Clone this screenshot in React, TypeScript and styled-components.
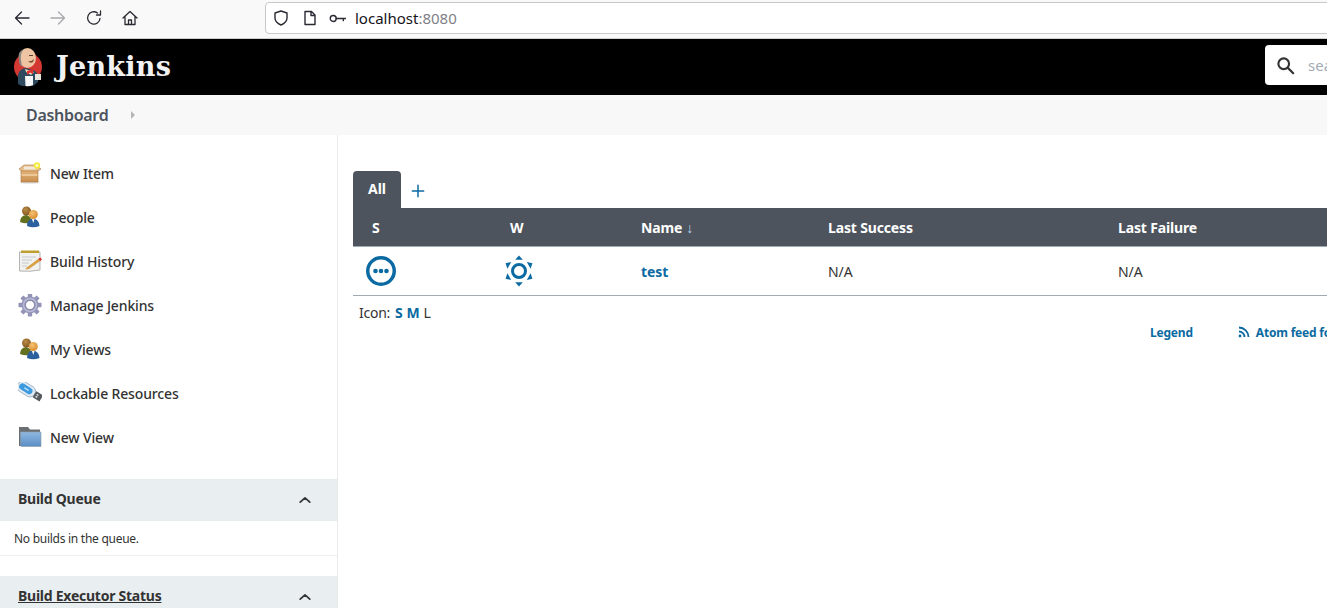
import React, { ReactNode } from 'react';
import styled, { createGlobalStyle } from 'styled-components';

const BLUE = '#0b6aa2';
const SLATE = '#4d545d';

const GlobalStyle = createGlobalStyle`
  html, body {
    margin: 0;
    height: 100%;
    overflow: hidden;
    background: #fff;
  }
  body {
    font-family: "Noto Sans", "Open Sans", sans-serif;
    color: #333;
  }
`;

const Page = styled.div`
  width: 1327px;
  height: 608px;
  overflow: hidden;
  display: flex;
  flex-direction: column;
`;

const Toolbar = styled.div`
  flex: 0 0 39px;
  box-sizing: border-box;
  display: flex;
  align-items: center;
  padding: 0 0 2px 14px;
  background: #f9f9fa;
  border-bottom: 1px solid #cfcfd2;
`;

const NavButton = styled.div<{ gap?: number }>`
  width: 16px;
  height: 16px;
  display: flex;
  margin-right: ${(props) => props.gap ?? 20}px;
`;

const UrlBar = styled.div`
  flex: 1;
  height: 30px;
  margin-right: -20px;
  display: flex;
  align-items: center;
  padding-left: 7px;
  background: #fff;
  border: 1px solid #c8c8cb;
  border-radius: 4px;
`;

const UrlIcon = styled.div<{ gap: number }>`
  display: flex;
  margin-right: ${(props) => props.gap}px;
`;

const UrlText = styled.span`
  font-size: 15px;
  color: #15141a;
`;

const UrlPort = styled.span`
  color: #7f7f86;
`;

const Header = styled.header`
  flex: 0 0 56px;
  display: flex;
  align-items: center;
  padding-left: 13px;
  background: #000;
`;

const LogoSlot = styled.div`
  display: flex;
  margin-bottom: 1px;
`;

const Wordmark = styled.div`
  margin: 0 0 1px 13px;
  font-family: "DejaVu Serif", "Liberation Serif", serif;
  font-size: 27px;
  font-weight: 700;
  letter-spacing: 0.25px;
  color: #f2f2f2;
`;

const SearchBox = styled.div`
  flex: 0 0 200px;
  height: 40px;
  margin: 0 -138px 4px auto;
  display: flex;
  align-items: center;
  padding-left: 11px;
  background: #fff;
  border-radius: 4px;
  box-sizing: border-box;
`;

const SearchHint = styled.span`
  margin: 0 0 1px 13px;
  font-size: 15px;
  color: #a3acb3;
`;

const Breadcrumbs = styled.nav`
  flex: 0 0 40px;
  display: flex;
  align-items: center;
  padding-left: 26px;
  background: #f8f8f8;
`;

const Crumb = styled.span`
  font-size: 16px;
  font-weight: 600;
  letter-spacing: -0.3px;
  color: ${SLATE};
`;

const CrumbArrow = styled.span`
  width: 0;
  height: 0;
  margin-left: 23px;
  border-left: 4px solid #b5b5b5;
  border-top: 4px solid transparent;
  border-bottom: 4px solid transparent;
`;

const Body = styled.div`
  flex: 1;
  display: flex;
  min-height: 0;
`;

const Sidebar = styled.aside`
  flex: 0 0 337px;
  padding-top: 17px;
  border-right: 1px solid #eaeaea;
`;

const TaskList = styled.div`
  margin-bottom: 19px;
`;

const Task = styled.div`
  height: 44px;
  display: flex;
  align-items: center;
  gap: 8px;
  padding-left: 18px;
  font-size: 14px;
  font-weight: 500;
  letter-spacing: -0.15px;
  color: #333;
`;

const TaskLabel = styled.span`
  margin-bottom: 2px;
`;

const TaskIcon = styled.div`
  width: 24px;
  height: 24px;
  display: flex;
`;

const PaneHeader = styled.div`
  height: 42px;
  display: flex;
  align-items: center;
  justify-content: space-between;
  padding: 0 25px 0 18px;
  background: #e9eef1;
  font-size: 14px;
  font-weight: 700;
  letter-spacing: -0.25px;
  color: #333;
`;

const PaneTitle = styled.span<{ linked?: boolean }>`
  margin-bottom: 4px;
  text-decoration: ${(props) => (props.linked ? 'underline' : 'none')};
`;

const PaneBody = styled.div`
  height: 34px;
  display: flex;
  align-items: center;
  padding-left: 14px;
  margin-bottom: 20px;
  border-bottom: 1px solid #eee;
  font-size: 12px;
  letter-spacing: -0.27px;
  color: #333;
`;

const Main = styled.main`
  flex: 1;
  min-width: 0;
  padding: 36px 0 0 15px;
  white-space: nowrap;
`;

const Tabs = styled.div`
  display: flex;
  align-items: center;
  height: 37px;
`;

const ActiveTab = styled.div`
  width: 48px;
  height: 37px;
  padding-top: 9px;
  box-sizing: border-box;
  text-align: center;
  background: ${SLATE};
  border-radius: 4px 4px 0 0;
  font-size: 14px;
  line-height: 17px;
  font-weight: 700;
  color: #fff;
`;

const AddTab = styled.div`
  display: flex;
  margin: 3px 0 0 10px;
`;

const Grid = styled.div<{ head?: boolean }>`
  display: grid;
  grid-template-columns: 138px 137px 187px 290px 1fr;
  align-items: center;
  padding-left: 13px;
  height: ${(props) => (props.head ? 38 : 48)}px;
  font-size: 14px;
  letter-spacing: ${(props) => (props.head ? '-0.15px' : '-0.05px')};
  color: ${(props) => (props.head ? '#fff' : '#333')};
  font-weight: ${(props) => (props.head ? 700 : 400)};
  background: ${(props) => (props.head ? SLATE : '#fff')};
  border-bottom: 1px solid #a0abb3;
`;

const HeadCell = styled.div<{ inset?: number }>`
  padding-left: ${(props) => props.inset ?? 0}px;
`;

const SortArrow = styled.span`
  margin-left: 4px;
  font-size: 14px;
  font-weight: 400;
  color: #b9d3ee;
`;

const NameLink = styled.span`
  font-weight: 700;
  color: ${BLUE};
`;

const IconSizes = styled.div`
  height: 34px;
  box-sizing: border-box;
  display: flex;
  align-items: center;
  padding: 0 0 2px 6px;
  font-size: 14px;
  letter-spacing: -0.25px;
  color: #333;
`;

const SizeCaption = styled.span`
  margin-right: 1px;
`;

const SizeLink = styled.span<{ current?: boolean }>`
  margin-left: 4px;
  font-weight: ${(props) => (props.current ? 400 : 700)};
  color: ${(props) => (props.current ? '#333' : BLUE)};
`;

const Feeds = styled.div`
  display: flex;
  align-items: center;
  height: 20px;
  margin-top: -8px;
  font-size: 12px;
  font-weight: 700;
  letter-spacing: -0.2px;
  color: ${BLUE};
`;

const FeedLink = styled.div<{ offset: number }>`
  display: flex;
  align-items: center;
  gap: 6px;
  margin-left: ${(props) => props.offset}px;
`;

const Line = ({
  size,
  color,
  children,
  width = 1.5
}: {
  size: number;
  color: string;
  children: ReactNode;
  width?: number;
}) => (
  <svg
    width={size}
    height={size}
    viewBox="0 0 16 16"
    fill="none"
    stroke={color}
    strokeWidth={width}
    strokeLinecap="round"
    strokeLinejoin="round"
  >
    {children}
  </svg>
);

const JenkinsLogo = () => (
  <svg width="30" height="40" viewBox="0 0 30 40">
    <circle cx="15" cy="20" r="14" fill="#d33833" />
    <path d="M5 37 V28 Q6 22 13 21 L22 24 Q26 27 25 35 L20 39 H9 Z" fill="#2f4a5e" />
    <path d="M12 22 L21 25 L18 28 L13 25 Z" fill="#f0d6b7" />
    <path d="M14 24 L20 22.500 L20 27 L17 25.500 L14 28 Z" fill="#e1312c" />
    <ellipse cx="14.500" cy="11" rx="8.500" ry="10" fill="#efc4a2" />
    <path d="M6 13 Q4 4 11 2 Q7 6 8 13 L9 20 Q6 18 6 13 Z" fill="#8a8680" />
    <path d="M15 14 Q18 15 21 12 L20 15 Q17 17 15 14 Z" fill="#7a4a35" />
    <path d="M16 8.500 H20" stroke="#4a3028" strokeWidth="0.900" />
    <path d="M12 29 H20 V38 Q16 40 12.500 39 Z" fill="#f6f6f6" />
    <path d="M22 27 H28 V33 H22 Z" fill="#e8e4dc" />
  </svg>
);

const NewItemIcon = () => (
  <svg width="24" height="24" viewBox="0 0 24 24">
    <defs>
      <linearGradient id="boxFront" x1="0" y1="0" x2="0" y2="1">
        <stop offset="0" stopColor="#e7b77c" />
        <stop offset="1" stopColor="#c98e50" />
      </linearGradient>
    </defs>
    <ellipse cx="12" cy="20.500" rx="10" ry="1.300" fill="#e2e2e2" />
    <path d="M3 8 H20 V20 H3 Z" fill="url(#boxFront)" stroke="#a9743e" strokeWidth="0.600" />
    <path d="M1 7 L6 3 H18 L23 7 L20 9 H4 Z" fill="#e6c08f" stroke="#a9743e" strokeWidth="0.600" />
    <path d="M6 4.500 H17 L18 7.500 H6 Z" fill="#f3efe6" opacity="0.85" />
    <path d="M3.500 13 H19.500" stroke="#f0d2a8" strokeWidth="1.500" />
    <circle cx="19" cy="3.500" r="3.200" fill="#f4ec3a" />
    <circle cx="19" cy="3.500" r="1.500" fill="#fffbc0" />
  </svg>
);

const PeopleIcon = () => (
  <svg width="24" height="24" viewBox="0 0 24 24">
    <defs>
      <radialGradient id="headBack" cx="0.400" cy="0.350" r="0.700">
        <stop offset="0" stopColor="#bb8a45" />
        <stop offset="1" stopColor="#7f5520" />
      </radialGradient>
      <radialGradient id="headFront" cx="0.400" cy="0.350" r="0.700">
        <stop offset="0" stopColor="#f6c274" />
        <stop offset="1" stopColor="#d68a28" />
      </radialGradient>
    </defs>
    <path d="M2 16 Q2 10 8 9 Q13 10 14 16 Q8 18.500 2 16 Z" fill="#62701f" />
    <circle cx="8.500" cy="5" r="4.500" fill="url(#headBack)" />
    <path d="M9 20 Q9 13 15 12.500 Q21 13 21.500 20 Q15 22.500 9 20 Z" fill="#2c5f9e" />
    <path d="M14 13 H16.500 L15.300 17 Z" fill="#fff" />
    <circle cx="15.300" cy="8.500" r="4.500" fill="url(#headFront)" />
  </svg>
);

const HistoryIcon = () => (
  <svg width="24" height="24" viewBox="0 0 24 24">
    <path d="M1.500 2 H22 V20 Q12 22 1.500 21 Z" fill="#f1f1ef" stroke="#a2a29f" strokeWidth="0.800" />
    <path d="M3 0.500 H21 V3 H3 Z" fill="#bfa02e" />
    <path d="M4 7 H18 M4 10 H14 M4 13 H11 M4 16 H9" stroke="#c4c9cc" strokeWidth="1" />
    <path d="M8 18 L20 9 L23 10.500 L11 19 L7.500 19.500 Z" fill="#d8a24a" />
    <path d="M20 9 L22.500 7.500 L24 9.500 L22.500 11 Z" fill="#d8352e" />
  </svg>
);

const GearIcon = () => (
  <svg width="24" height="24" viewBox="0 0 24 24">
    <g transform="translate(0 -1)">
      <g fill="#9394b8">
        <circle cx="12" cy="12" r="8.500" />
        {[0, 45, 90, 135, 180, 225, 270, 315].map((angle) => (
          <rect key={angle} x="9.800" y="0.500" width="4.400" height="6" rx="0.800" transform={`rotate(${angle} 12 12)`} />
        ))}
      </g>
      <circle cx="12" cy="12" r="6.500" fill="none" stroke="#b9bad4" strokeWidth="1.500" />
      <circle cx="12" cy="12" r="4.500" fill="#fff" stroke="#6f7090" strokeWidth="0.700" />
    </g>
  </svg>
);

const UsbIcon = () => (
  <svg width="24" height="24" viewBox="0 0 24 24">
    <g transform="translate(0 -2) rotate(32 12 12)">
      <rect x="-2.500" y="6" width="19.500" height="11" rx="5" fill="#dfeaf2" stroke="#8aa3b4" strokeWidth="0.700" />
      <rect x="-0.500" y="8.200" width="14.500" height="6.500" rx="3.200" fill="#3d9ade" />
      <rect x="5" y="10.800" width="5" height="1.200" fill="#d4effc" />
      <rect x="17" y="8" width="8" height="7" fill="#55595e" />
      <rect x="19" y="9.800" width="2" height="1.400" fill="#e8e8e8" />
      <rect x="19" y="12" width="2" height="1.400" fill="#e8e8e8" />
    </g>
  </svg>
);

const FolderIcon = () => (
  <svg width="24" height="24" viewBox="0 0 24 24">
    <defs>
      <linearGradient id="folderFront" x1="0" y1="0" x2="0" y2="1">
        <stop offset="0" stopColor="#8fb8e2" />
        <stop offset="1" stopColor="#5a8dc4" />
      </linearGradient>
    </defs>
    <path d="M1 1 H10 L12 3.500 H22 V20 H1 Z" fill="#6b6f72" />
    <path d="M2.500 6 H23 V20.500 H3.500 Q2.500 20.500 2.500 19.500 Z" fill="url(#folderFront)" stroke="#8b9aa6" strokeWidth="0.600" />
  </svg>
);

const Chevron = () => (
  <Line size={14} color="#333" width={2}>
    <path d="M2.500 10.500 L8 5.500 L13.500 10.500" />
  </Line>
);

const StatusIcon = () => (
  <svg width="30" height="30" viewBox="0 0 30 30">
    <circle cx="15" cy="15" r="13.250" fill="none" stroke={BLUE} strokeWidth="3.500" />
    <circle cx="9.500" cy="15" r="2.300" fill={BLUE} />
    <circle cx="15" cy="15" r="2.300" fill={BLUE} />
    <circle cx="20.500" cy="15" r="2.300" fill={BLUE} />
  </svg>
);

const WeatherIcon = () => (
  <svg width="30" height="32" viewBox="0 0 30 32">
    <circle cx="15" cy="16" r="6.500" fill="none" stroke={BLUE} strokeWidth="3" />
    {[0, 60, 120, 180, 240, 300].map((angle) => (
      <path key={angle} d="M15 0.500 L18.800 4.800 H11.200 Z" fill={BLUE} transform={`rotate(${angle} 15 16)`} />
    ))}
  </svg>
);

const tasks: { label: string; icon: ReactNode }[] = [
  { label: 'New Item', icon: <NewItemIcon /> },
  { label: 'People', icon: <PeopleIcon /> },
  { label: 'Build History', icon: <HistoryIcon /> },
  { label: 'Manage Jenkins', icon: <GearIcon /> },
  { label: 'My Views', icon: <PeopleIcon /> },
  { label: 'Lockable Resources', icon: <UsbIcon /> },
  { label: 'New View', icon: <FolderIcon /> }
];

const App = () => (
  <Page>
    <GlobalStyle />
    <Toolbar>
      <NavButton>
        <Line size={16} color="#2b2a33" width={1.3}>
          <path d="M15 8 H1.500 M7.500 2 L1.500 8 L7.500 14" />
        </Line>
      </NavButton>
      <NavButton>
        <Line size={16} color="#a9a9ad" width={1.3}>
          <path d="M1 8 H14.500 M8.500 2 L14.500 8 L8.500 14" />
        </Line>
      </NavButton>
      <NavButton>
        <Line size={16} color="#2b2a33" width={1.3}>
          <path d="M14 8.500 A6.200 6.200 0 1 1 11.500 3 M14.500 1 V5 H10.500" />
        </Line>
      </NavButton>
      <NavButton gap={127}>
        <Line size={16} color="#2b2a33" width={1.3}>
          <path d="M1 8 L8 1.500 L15 8 M3 6.500 V14.500 H13 V6.500 M6.500 14.500 V10 H9.500 V14.500" />
        </Line>
      </NavButton>
      <UrlBar>
        <UrlIcon gap={13}>
          <Line size={16} color="#2b2a33" width={1.4}>
            <path d="M8 1 L14 3 V8 Q14 12.500 8 15 Q2 12.500 2 8 V3 Z" />
          </Line>
        </UrlIcon>
        <UrlIcon gap={11}>
          <Line size={16} color="#2b2a33" width={1.4}>
            <path d="M3 1.500 H9.500 L13 5 V14.500 H3 Z M9 1.500 V5.500 H13" />
          </Line>
        </UrlIcon>
        <UrlIcon gap={9}>
          <Line size={17} color="#2b2a33" width={1.3}>
            <circle cx="4" cy="8" r="2.800" />
            <path d="M6.800 8 H15.500 M13.500 8 V10" />
          </Line>
        </UrlIcon>
        <UrlText>
          localhost<UrlPort>:8080</UrlPort>
        </UrlText>
      </UrlBar>
    </Toolbar>
    <Header>
      <LogoSlot>
        <JenkinsLogo />
      </LogoSlot>
      <Wordmark>Jenkins</Wordmark>
      <SearchBox>
        <Line size={19} color="#333" width={1.8}>
          <circle cx="6.500" cy="6.500" r="4.500" />
          <path d="M10 10 L14.500 14.500" />
        </Line>
        <SearchHint>search</SearchHint>
      </SearchBox>
    </Header>
    <Breadcrumbs>
      <Crumb>Dashboard</Crumb>
      <CrumbArrow />
    </Breadcrumbs>
    <Body>
      <Sidebar>
        <TaskList>
          {tasks.map((task) => (
            <Task key={task.label}>
              <TaskIcon>{task.icon}</TaskIcon>
              <TaskLabel>{task.label}</TaskLabel>
            </Task>
          ))}
        </TaskList>
        <PaneHeader>
          <PaneTitle>Build Queue</PaneTitle>
          <Chevron />
        </PaneHeader>
        <PaneBody>No builds in the queue.</PaneBody>
        <PaneHeader>
          <PaneTitle linked>Build Executor Status</PaneTitle>
          <Chevron />
        </PaneHeader>
      </Sidebar>
      <Main>
        <Tabs>
          <ActiveTab>All</ActiveTab>
          <AddTab>
            <Line size={14} color={BLUE} width={1.7}>
              <path d="M8 1.500 V14.500 M1.500 8 H14.500" />
            </Line>
          </AddTab>
        </Tabs>
        <Grid head>
          <HeadCell inset={6}>S</HeadCell>
          <HeadCell inset={6}>W</HeadCell>
          <HeadCell>
            Name<SortArrow>↓</SortArrow>
          </HeadCell>
          <HeadCell>Last Success</HeadCell>
          <HeadCell>Last Failure</HeadCell>
        </Grid>
        <Grid>
          <StatusIcon />
          <WeatherIcon />
          <NameLink>test</NameLink>
          <div>N/A</div>
          <div>N/A</div>
        </Grid>
        <IconSizes>
          <SizeCaption>Icon:</SizeCaption>
          <SizeLink>S</SizeLink>
          <SizeLink>M</SizeLink>
          <SizeLink current>L</SizeLink>
        </IconSizes>
        <Feeds>
          <FeedLink offset={797}>Legend</FeedLink>
          <FeedLink offset={45}>
            <svg width="12" height="12" viewBox="0 0 12 12" fill="none" stroke={BLUE} strokeWidth="1.800">
              <path d="M1 1.500 A9.500 9.500 0 0 1 10.500 11 M1 5.500 A5.500 5.500 0 0 1 6.500 11" />
              <circle cx="2" cy="10" r="1.400" fill={BLUE} stroke="none" />
            </svg>
            Atom feed for all
          </FeedLink>
        </Feeds>
      </Main>
    </Body>
  </Page>
);

export default App;
